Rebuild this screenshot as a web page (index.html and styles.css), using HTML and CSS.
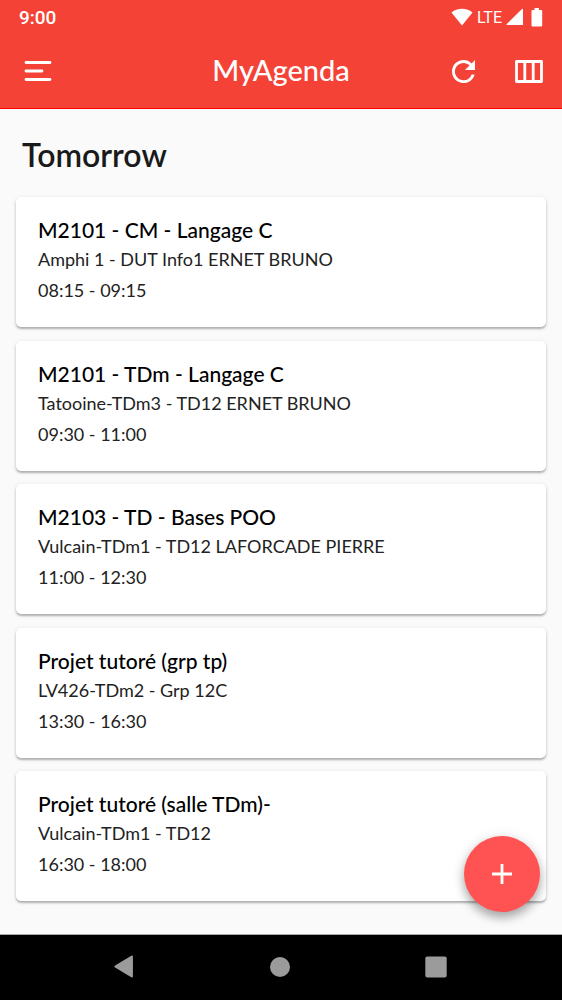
FILE: index.html
```
<!DOCTYPE html>
<html lang="en">
<head>
<meta charset="utf-8">
<meta name="viewport" content="width=device-width, initial-scale=1">
<title>MyAgenda</title>
<link rel="stylesheet" href="styles.css">
</head>
<body>
<div class="screen">
  <header class="header">
    <div class="status">
      <span class="clock">9:00</span>
      <div class="signals">
        <svg class="wifi" width="22" height="18" viewBox="0 0 22 18" fill="currentColor" aria-hidden="true"><path d="M.5 4.600C3.500 2 7 .8 11 .8s7.500 1.200 10.500 3.800L11 17.500z"/></svg>
        <span class="network">LTE</span>
        <svg class="cell" width="17" height="18" viewBox="0 0 17 18" fill="currentColor" aria-hidden="true"><path d="M16 1q1-.8 1 .4V17H1Q0 17 .6 16.200z"/></svg>
        <svg width="12" height="19" viewBox="0 0 12 19" fill="currentColor" aria-hidden="true"><path d="M3.500 0h4.500v2h2.200q1 0 1 1v14.500q0 1-1 1H1.500q-1 0-1-1V3q0-1 1-1h2z"/></svg>
      </div>
    </div>
    <div class="appbar">
      <button class="icon-button" aria-label="Open menu">
        <svg width="28" height="22" viewBox="0 0 28 22" fill="none" stroke="currentColor" stroke-width="2.800" stroke-linecap="round" aria-hidden="true"><path d="M2 2.500h24M2 11h16M2 19.500h24"/></svg>
      </button>
      <h1 class="title">MyAgenda</h1>
      <div class="actions">
        <button class="icon-button" aria-label="Refresh">
          <svg width="23" height="23" viewBox="4 4 16 16" fill="currentColor" aria-hidden="true"><path d="M17.650 6.350A7.958 7.958 0 0 0 12 4c-4.420 0-7.990 3.580-7.990 8s3.570 8 7.990 8c3.730 0 6.840-2.550 7.730-6h-2.080A5.990 5.990 0 0 1 12 18c-3.310 0-6-2.690-6-6s2.690-6 6-6c1.660 0 3.140.69 4.220 1.780L13 11h7V4z"/></svg>
        </button>
        <button class="icon-button" aria-label="Column view">
          <svg width="28" height="23" viewBox="0 0 28 23" fill="none" stroke="currentColor" stroke-width="2.800" stroke-linejoin="round" aria-hidden="true"><path d="M1.500 1.500h25v20h-25zM9.800 1.500v20M18.200 1.500v20"/></svg>
        </button>
      </div>
    </div>
  </header>
  <main class="content">
    <h2 class="day">Tomorrow</h2>
    <div class="events">
      <article class="event"><h3 class="name">M2101 - CM - Langage C</h3><p class="place">Amphi 1 - DUT Info1 ERNET BRUNO</p><p class="time">08:15 - 09:15</p></article>
      <article class="event"><h3 class="name">M2101 - TDm - Langage C</h3><p class="place">Tatooine-TDm3 - TD12 ERNET BRUNO</p><p class="time">09:30 - 11:00</p></article>
      <article class="event"><h3 class="name">M2103 - TD - Bases POO</h3><p class="place">Vulcain-TDm1 - TD12 LAFORCADE PIERRE</p><p class="time">11:00 - 12:30</p></article>
      <article class="event"><h3 class="name">Projet tutoré (grp tp)</h3><p class="place">LV426-TDm2 - Grp 12C</p><p class="time">13:30 - 16:30</p></article>
      <article class="event"><h3 class="name">Projet tutoré (salle TDm)-</h3><p class="place">Vulcain-TDm1 - TD12</p><p class="time">16:30 - 18:00</p></article>
    </div>
    <button class="fab" aria-label="Add event">
      <svg width="20" height="20" viewBox="0 0 20 20" fill="none" stroke="currentColor" stroke-width="2.800" aria-hidden="true"><path d="M10 0v20M0 10h20"/></svg>
    </button>
  </main>
  <nav class="navbar" aria-label="System">
    <button class="nav-button" aria-label="Back"><svg width="20" height="23" viewBox="0 0 22 24" preserveAspectRatio="none" fill="currentColor" aria-hidden="true"><path d="M1.200 11 19 .8q1.800-.8 1.800 1v20.400q0 1.800-1.800 1L1.200 13q-1.600-1 0-2z"/></svg></button>
    <button class="nav-button" aria-label="Home"><svg width="20" height="20" viewBox="0 0 20 20" fill="currentColor" aria-hidden="true"><circle cx="10" cy="10" r="10"/></svg></button>
    <button class="nav-button" aria-label="Recent apps"><svg width="22" height="22" viewBox="0 0 22 22" fill="currentColor" aria-hidden="true"><rect x=".3" y=".5" width="21.400" height="21" rx="2"/></svg></button>
  </nav>
</div>
</body>
</html>
```
FILE: styles.css
```
* { box-sizing: border-box; }
body { margin: 0; background: #fafafa; color: #111; font-family: Lato, "Open Sans", sans-serif; }
h1, h2, h3, p { margin: 0; }
button { display: flex; align-items: center; justify-content: center; padding: 0; border: 0; background: none; color: inherit; cursor: pointer; }
svg { display: block; }

.screen { display: flex; flex-direction: column; min-height: 100vh; }

.header { background: #f44336; border-bottom: 1px solid #f00; color: #fff; }
.status { display: flex; align-items: center; justify-content: space-between; height: 34px; padding: 0 19px; font-family: Roboto, sans-serif; }
.clock { font-size: 19px; font-weight: 500; }
.signals { display: flex; align-items: center; gap: 4px; }
.network { font-size: 16px; font-weight: 400; }
.cell { margin-right: 4px; }
.appbar { display: grid; grid-template-columns: 1fr auto 1fr; align-items: center; height: 74px; padding: 0 13px; }
.icon-button { width: 50px; height: 50px; }
.title { padding-bottom: 2px; font-size: 29px; font-weight: 500; line-height: 36px; }
.actions { display: flex; justify-content: flex-end; gap: 16px; margin-right: -5px; }

.content { position: relative; display: flex; flex: 1; flex-direction: column; padding: 26px 16px 33px; }
.day { padding: 0 6px; margin-bottom: 22px; color: #1a1a1a; font-size: 32px; font-weight: 600; line-height: 40px; }
.events { display: flex; flex: 1; flex-direction: column; justify-content: space-between; gap: 12px; }
.event { padding: 19px 22px 23px; border-radius: 5px; background: #fff; box-shadow: 0 2px 2px rgba(0, 0, 0, .24), 0 1px 4px rgba(0, 0, 0, .12); color: #000; }
.name { font-size: 21px; font-weight: 500; line-height: 28px; }
.place { color: #222; font-size: 18px; font-weight: 400; line-height: 30px; }
.time { margin-top: 2px; color: #222; font-size: 18px; font-weight: 400; line-height: 28px; }

.fab { position: absolute; right: 22px; bottom: 22px; width: 76px; height: 76px; border-radius: 50%; background: #ff5252; box-shadow: 0 6px 10px rgba(0, 0, 0, .26), 0 2px 14px rgba(0, 0, 0, .14); color: #fff; }

.navbar { display: flex; align-items: center; justify-content: space-between; height: 66px; padding: 0 101px 2px 99px; border-top: 1px solid #aaa; background: #000; color: #9b9b9b; }
.nav-button { width: 50px; height: 50px; }
```
